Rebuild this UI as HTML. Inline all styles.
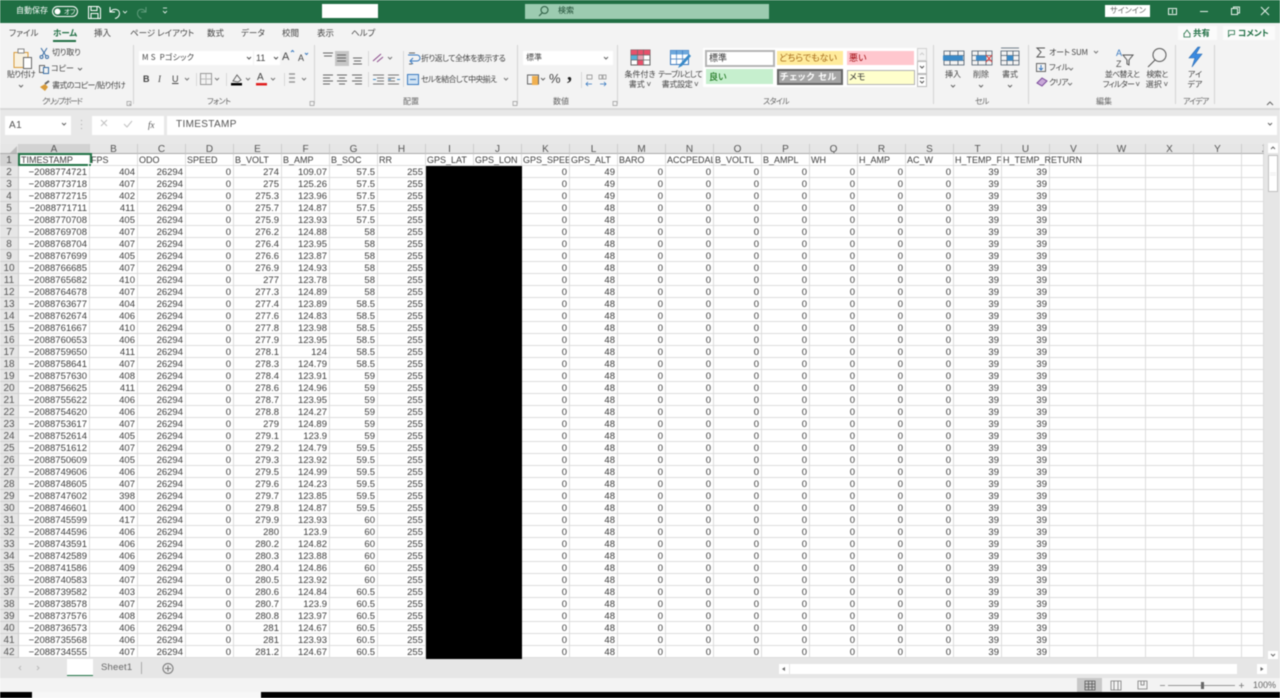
<!DOCTYPE html>
<html lang="ja"><head><meta charset="utf-8"><title>Excel</title>
<style>
html,body{margin:0;padding:0;background:#fff}
#p{position:relative;width:1280px;height:698px;overflow:hidden;background:#e6e6e6;font-family:"Liberation Sans","Noto Sans CJK JP",sans-serif;filter:blur(.4px)}
.b{position:absolute}
.t{position:absolute;white-space:nowrap;font-size:8px;line-height:12px;color:#444;font-feature-settings:"palt";font-family:"Noto Sans CJK JP","Liberation Sans",sans-serif}
.c{transform:translateX(-50%)}
.w{color:#fff}
.g{color:#666}
table{position:absolute;left:0;top:144px;border-collapse:separate;border-spacing:0;table-layout:fixed;width:1264px;font-size:9.5px;color:#3c3c3c;background:#fff;font-family:"Liberation Sans",sans-serif}
td,th{padding:2px 0 0;height:9px;line-height:9px;border-right:1px solid #dcdcdc;border-bottom:1px solid #dcdcdc;overflow:hidden;white-space:nowrap;box-sizing:content-box}
td{text-align:right;padding-right:2px}
th{background:#e6e6e6;font-weight:normal;text-align:center;color:#555;font-size:10px;border-right:1px solid #c8c8c8;border-bottom:1px solid #cfcfcf}
thead th{padding:2px 0 0;height:7px;line-height:7px;border-right:1px solid #cdcdcd;border-bottom:1px solid #ababab}
tr.h td{text-align:left;padding:2px 0 0 1px;font-size:9px}
</style></head><body><div id="p">

<div class="b" style="left:0;top:0;width:1280px;height:23px;background:#1f6e43"></div>
<div class="b" style="left:0;top:23px;width:1280px;height:85px;background:#f3f3f3"></div>
<div class="b" style="left:0;top:108px;width:1280px;height:2px;background:#d8d8d8"></div>
<div class="b" style="left:0;top:110px;width:1280px;height:34px;background:#e8e8e8"></div>

<div class="b" style="left:322px;top:4px;width:56px;height:14px;background:#fff"></div>
<div class="b" style="left:525px;top:4px;width:244px;height:15px;background:#9ccbb0"></div>
<div class="b" style="left:1105px;top:5px;width:45px;height:12px;background:#fff"></div>
<div class="b" style="left:1178px;top:26px;width:39px;height:14px;background:#fbfbfb"></div>
<div class="b" style="left:1223px;top:26px;width:52px;height:14px;background:#fbfbfb"></div>

<span class="t w" style="left:16px;top:5px">自動保存</span>
<span class="t w" style="left:64px;top:5px;font-size:6.5px">オフ</span>
<span class="t" style="left:558px;top:5px;color:#1c4a32">検索</span>
<span class="t c g" style="left:1128px;top:5px">サインイン</span>

<span class="t" style="left:9px;top:27px;font-size:8.5px">ファイル</span>
<span class="t" style="left:53px;top:27px;font-size:8.5px;font-weight:700;color:#1f6e43">ホーム</span>
<span class="t" style="left:94px;top:27px;font-size:8.5px">挿入</span>
<span class="t" style="left:130px;top:27px;font-size:8.5px">ページ レイアウト</span>
<span class="t" style="left:207px;top:27px;font-size:8.5px">数式</span>
<span class="t" style="left:241px;top:27px;font-size:8.5px">データ</span>
<span class="t" style="left:282px;top:27px;font-size:8.5px">校閲</span>
<span class="t" style="left:317px;top:27px;font-size:8.5px">表示</span>
<span class="t" style="left:351px;top:27px;font-size:8.5px">ヘルプ</span>
<div class="b" style="left:53px;top:40px;width:23px;height:2px;background:#1f6e43"></div>
<span class="t" style="left:1193px;top:27px;font-size:8.5px;font-weight:700;color:#1f6e43">共有</span>
<span class="t" style="left:1238px;top:27px;font-size:8.5px;font-weight:700;color:#1f6e43">コメント</span>

<span class="t" style="left:7px;top:69px;letter-spacing:-.6px">貼り付け</span>
<span class="t" style="left:52px;top:47px;letter-spacing:-.2px">切り取り</span>
<span class="t" style="left:51px;top:63px">コピー</span>
<span class="t" style="left:52px;top:80px;letter-spacing:-.65px">書式のコピー/貼り付け</span>
<span class="t g" style="left:42px;top:96px;letter-spacing:-1.4px">クリップボード</span>
<span class="t g" style="left:207px;top:96px;letter-spacing:-.7px">フォント</span>
<span class="t g" style="left:403px;top:96px">配置</span>
<span class="t g" style="left:553px;top:96px">数値</span>
<span class="t g" style="left:763px;top:96px;letter-spacing:-.7px">スタイル</span>
<span class="t g" style="left:975px;top:96px;letter-spacing:-.7px">セル</span>
<span class="t g" style="left:1096px;top:96px">編集</span>
<span class="t g" style="left:1183px;top:96px;letter-spacing:-.9px">アイデア</span>

<div class="b" style="left:139px;top:51px;width:114px;height:14px;background:#fff"></div>
<div class="b" style="left:254px;top:51px;width:26px;height:14px;background:#fff"></div>
<span class="t" style="left:142px;top:52px;letter-spacing:.2px">M S &nbsp;Pゴシック</span>
<span class="t" style="left:256px;top:52px;font-size:9px;font-family:'Liberation Sans',sans-serif">11</span>
<span class="t" style="left:282px;top:51px;font-size:11px;font-family:'Liberation Sans',sans-serif">A</span>
<span class="t" style="left:298px;top:52px;font-size:9px;font-family:'Liberation Sans',sans-serif">A</span>
<span class="t" style="left:143px;top:73px;font-size:9px;font-weight:700;font-family:'Liberation Sans',sans-serif">B</span>
<span class="t" style="left:158px;top:73px;font-size:9px;font-style:italic;font-family:'Liberation Serif',serif">I</span>
<span class="t" style="left:172px;top:73px;font-size:9px;text-decoration:underline;font-family:'Liberation Sans',sans-serif">U</span>
<span class="t" style="left:257px;top:72px;font-size:10px;font-family:'Liberation Sans',sans-serif">A</span>

<div class="b" style="left:335px;top:51px;width:14px;height:15px;background:#c6c6c6"></div>

<span class="t" style="left:421px;top:53px;letter-spacing:-.5px">折り返して全体を表示する</span>
<span class="t" style="left:421px;top:74px;letter-spacing:-.75px">セルを結合して中央揃え</span>

<div class="b" style="left:523px;top:51px;width:90px;height:14px;background:#fff"></div>
<span class="t" style="left:526px;top:52px">標準</span>
<span class="t" style="left:549px;top:73px;font-size:13px;font-family:'Liberation Sans',sans-serif">%</span>
<span class="t" style="left:567px;top:68px;font-size:20px;font-weight:700;color:#222;font-family:'Liberation Serif',serif">,</span>

<span class="t c" style="left:640px;top:69px">条件付き</span>
<span class="t c" style="left:640px;top:79px">書式 ˅</span>
<span class="t c" style="left:680px;top:69px;letter-spacing:-.9px">テーブルとして</span>
<span class="t c" style="left:680px;top:79px;letter-spacing:-.3px">書式設定 ˅</span>

<div class="b" style="left:703px;top:48px;width:214px;height:39px;background:#fff"></div>
<div class="b" style="left:705px;top:50px;width:66px;height:13px;background:#fff;border:2px solid #b4b4b4"></div>
<div class="b" style="left:777px;top:51px;width:66px;height:14px;background:#ffeb9c"></div>
<div class="b" style="left:847px;top:51px;width:67px;height:14px;background:#ffc7ce"></div>
<div class="b" style="left:706px;top:69px;width:67px;height:15px;background:#c6efce"></div>
<div class="b" style="left:777px;top:69px;width:62px;height:12px;background:#a5a5a5;border:2px solid #666"></div>
<div class="b" style="left:847px;top:70px;width:66px;height:13px;background:#ffffcc;border:1px solid #b2b2b2"></div>
<span class="t" style="left:709px;top:52px;font-size:9px;color:#333">標準</span>
<span class="t" style="left:779px;top:52px;font-size:9px;color:#a5691a">どちらでもない</span>
<span class="t" style="left:849px;top:52px;font-size:9px;color:#9c0006">悪い</span>
<span class="t" style="left:709px;top:71px;font-size:9px;color:#006100">良い</span>
<span class="t" style="left:780px;top:71px;font-size:9px;font-weight:700;color:#fff;letter-spacing:.8px">チェック セル</span>
<span class="t" style="left:849px;top:71px;font-size:9px;color:#333">メモ</span>

<span class="t c" style="left:953px;top:69px">挿入</span>
<span class="t c" style="left:981px;top:69px">削除</span>
<span class="t c" style="left:1010px;top:69px">書式</span>
<span class="t" style="left:1049px;top:47px;letter-spacing:-.2px">オート SUM</span>
<span class="t" style="left:1049px;top:62px">フィル</span>
<span class="t" style="left:1049px;top:77px;letter-spacing:-.8px">クリア</span>
<span class="t c" style="left:1122px;top:69px;letter-spacing:-.8px">並べ替えと</span>
<span class="t c" style="left:1121px;top:79px;letter-spacing:-.7px">フィルター ˅</span>
<span class="t c" style="left:1157px;top:69px;letter-spacing:-.6px">検索と</span>
<span class="t c" style="left:1157px;top:79px">選択 ˅</span>
<span class="t c" style="left:1195px;top:69px">アイ</span>
<span class="t c" style="left:1195px;top:79px">デア</span>

<div class="b" style="left:5px;top:116px;width:66px;height:19px;background:#fff"></div>
<div class="b" style="left:92px;top:116px;width:72px;height:19px;background:#fff"></div>
<div class="b" style="left:167px;top:116px;width:1110px;height:19px;background:#fff"></div>
<span class="t" style="left:9px;top:119px;font-size:10px;line-height:13px;letter-spacing:.5px;font-family:'Liberation Sans',sans-serif;color:#555">A1</span>
<span class="t" style="left:148px;top:119px;font-size:9px;font-style:italic;line-height:12px;font-family:'Liberation Serif',serif;color:#555">fx</span>
<span class="t" style="left:176px;top:118px;font-size:10px;line-height:13px;letter-spacing:.35px;font-family:'Liberation Sans',sans-serif;color:#555">TIMESTAMP</span>

<table><colgroup><col style="width:19px"><col style="width:71px"><col span="24" style="width:48px"><col style="width:22px"></colgroup>
<thead><tr><th></th><th style="background:#d2d2d2;border-bottom:1px solid #217346">A</th><th>B</th><th>C</th><th>D</th><th>E</th><th>F</th><th>G</th><th>H</th><th>I</th><th>J</th><th>K</th><th>L</th><th>M</th><th>N</th><th>O</th><th>P</th><th>Q</th><th>R</th><th>S</th><th>T</th><th>U</th><th>V</th><th>W</th><th>X</th><th>Y</th><th style="text-align:left;text-indent:20px">Z</th></tr></thead>
<tbody>
<tr class="h"><th style="background:#d2d2d2">1<td style="padding-left:2px">TIMESTAMP<td>FPS<td>ODO<td>SPEED<td>B_VOLT<td>B_AMP<td>B_SOC<td>RR<td>GPS_LAT<td>GPS_LON<td>GPS_SPEED<td>GPS_ALT<td>BARO<td>ACCPEDAL<td>B_VOLTL<td>B_AMPL<td>WH<td>H_AMP<td>AC_W<td>H_TEMP_FLOW<td style="overflow:visible">H_TEMP_RETURN<td><td><td><td><td>
<tr><th>2<td>−2088774721<td>404<td>26294<td>0<td>274<td>109.07<td>57.5<td>255<td><td><td>0<td>49<td>0<td>0<td>0<td>0<td>0<td>0<td>0<td>39<td>39<td><td><td><td><td>
<tr><th>3<td>−2088773718<td>407<td>26294<td>0<td>275<td>125.26<td>57.5<td>255<td><td><td>0<td>49<td>0<td>0<td>0<td>0<td>0<td>0<td>0<td>39<td>39<td><td><td><td><td>
<tr><th>4<td>−2088772715<td>402<td>26294<td>0<td>275.3<td>123.96<td>57.5<td>255<td><td><td>0<td>49<td>0<td>0<td>0<td>0<td>0<td>0<td>0<td>39<td>39<td><td><td><td><td>
<tr><th>5<td>−2088771711<td>411<td>26294<td>0<td>275.7<td>124.87<td>57.5<td>255<td><td><td>0<td>48<td>0<td>0<td>0<td>0<td>0<td>0<td>0<td>39<td>39<td><td><td><td><td>
<tr><th>6<td>−2088770708<td>405<td>26294<td>0<td>275.9<td>123.93<td>57.5<td>255<td><td><td>0<td>48<td>0<td>0<td>0<td>0<td>0<td>0<td>0<td>39<td>39<td><td><td><td><td>
<tr><th>7<td>−2088769708<td>407<td>26294<td>0<td>276.2<td>124.88<td>58<td>255<td><td><td>0<td>48<td>0<td>0<td>0<td>0<td>0<td>0<td>0<td>39<td>39<td><td><td><td><td>
<tr><th>8<td>−2088768704<td>407<td>26294<td>0<td>276.4<td>123.95<td>58<td>255<td><td><td>0<td>48<td>0<td>0<td>0<td>0<td>0<td>0<td>0<td>39<td>39<td><td><td><td><td>
<tr><th>9<td>−2088767699<td>405<td>26294<td>0<td>276.6<td>123.87<td>58<td>255<td><td><td>0<td>48<td>0<td>0<td>0<td>0<td>0<td>0<td>0<td>39<td>39<td><td><td><td><td>
<tr><th>10<td>−2088766685<td>407<td>26294<td>0<td>276.9<td>124.93<td>58<td>255<td><td><td>0<td>48<td>0<td>0<td>0<td>0<td>0<td>0<td>0<td>39<td>39<td><td><td><td><td>
<tr><th>11<td>−2088765682<td>410<td>26294<td>0<td>277<td>123.78<td>58<td>255<td><td><td>0<td>48<td>0<td>0<td>0<td>0<td>0<td>0<td>0<td>39<td>39<td><td><td><td><td>
<tr><th>12<td>−2088764678<td>407<td>26294<td>0<td>277.3<td>124.89<td>58<td>255<td><td><td>0<td>48<td>0<td>0<td>0<td>0<td>0<td>0<td>0<td>39<td>39<td><td><td><td><td>
<tr><th>13<td>−2088763677<td>404<td>26294<td>0<td>277.4<td>123.89<td>58.5<td>255<td><td><td>0<td>48<td>0<td>0<td>0<td>0<td>0<td>0<td>0<td>39<td>39<td><td><td><td><td>
<tr><th>14<td>−2088762674<td>406<td>26294<td>0<td>277.6<td>124.83<td>58.5<td>255<td><td><td>0<td>48<td>0<td>0<td>0<td>0<td>0<td>0<td>0<td>39<td>39<td><td><td><td><td>
<tr><th>15<td>−2088761667<td>410<td>26294<td>0<td>277.8<td>123.98<td>58.5<td>255<td><td><td>0<td>48<td>0<td>0<td>0<td>0<td>0<td>0<td>0<td>39<td>39<td><td><td><td><td>
<tr><th>16<td>−2088760653<td>406<td>26294<td>0<td>277.9<td>123.95<td>58.5<td>255<td><td><td>0<td>48<td>0<td>0<td>0<td>0<td>0<td>0<td>0<td>39<td>39<td><td><td><td><td>
<tr><th>17<td>−2088759650<td>411<td>26294<td>0<td>278.1<td>124<td>58.5<td>255<td><td><td>0<td>48<td>0<td>0<td>0<td>0<td>0<td>0<td>0<td>39<td>39<td><td><td><td><td>
<tr><th>18<td>−2088758641<td>407<td>26294<td>0<td>278.3<td>124.79<td>58.5<td>255<td><td><td>0<td>48<td>0<td>0<td>0<td>0<td>0<td>0<td>0<td>39<td>39<td><td><td><td><td>
<tr><th>19<td>−2088757630<td>408<td>26294<td>0<td>278.4<td>123.91<td>59<td>255<td><td><td>0<td>48<td>0<td>0<td>0<td>0<td>0<td>0<td>0<td>39<td>39<td><td><td><td><td>
<tr><th>20<td>−2088756625<td>411<td>26294<td>0<td>278.6<td>124.96<td>59<td>255<td><td><td>0<td>48<td>0<td>0<td>0<td>0<td>0<td>0<td>0<td>39<td>39<td><td><td><td><td>
<tr><th>21<td>−2088755622<td>406<td>26294<td>0<td>278.7<td>123.95<td>59<td>255<td><td><td>0<td>48<td>0<td>0<td>0<td>0<td>0<td>0<td>0<td>39<td>39<td><td><td><td><td>
<tr><th>22<td>−2088754620<td>406<td>26294<td>0<td>278.8<td>124.27<td>59<td>255<td><td><td>0<td>48<td>0<td>0<td>0<td>0<td>0<td>0<td>0<td>39<td>39<td><td><td><td><td>
<tr><th>23<td>−2088753617<td>407<td>26294<td>0<td>279<td>124.89<td>59<td>255<td><td><td>0<td>48<td>0<td>0<td>0<td>0<td>0<td>0<td>0<td>39<td>39<td><td><td><td><td>
<tr><th>24<td>−2088752614<td>405<td>26294<td>0<td>279.1<td>123.9<td>59<td>255<td><td><td>0<td>48<td>0<td>0<td>0<td>0<td>0<td>0<td>0<td>39<td>39<td><td><td><td><td>
<tr><th>25<td>−2088751612<td>407<td>26294<td>0<td>279.2<td>124.79<td>59.5<td>255<td><td><td>0<td>48<td>0<td>0<td>0<td>0<td>0<td>0<td>0<td>39<td>39<td><td><td><td><td>
<tr><th>26<td>−2088750609<td>405<td>26294<td>0<td>279.3<td>123.92<td>59.5<td>255<td><td><td>0<td>48<td>0<td>0<td>0<td>0<td>0<td>0<td>0<td>39<td>39<td><td><td><td><td>
<tr><th>27<td>−2088749606<td>406<td>26294<td>0<td>279.5<td>124.99<td>59.5<td>255<td><td><td>0<td>48<td>0<td>0<td>0<td>0<td>0<td>0<td>0<td>39<td>39<td><td><td><td><td>
<tr><th>28<td>−2088748605<td>407<td>26294<td>0<td>279.6<td>124.23<td>59.5<td>255<td><td><td>0<td>48<td>0<td>0<td>0<td>0<td>0<td>0<td>0<td>39<td>39<td><td><td><td><td>
<tr><th>29<td>−2088747602<td>398<td>26294<td>0<td>279.7<td>123.85<td>59.5<td>255<td><td><td>0<td>48<td>0<td>0<td>0<td>0<td>0<td>0<td>0<td>39<td>39<td><td><td><td><td>
<tr><th>30<td>−2088746601<td>400<td>26294<td>0<td>279.8<td>124.87<td>59.5<td>255<td><td><td>0<td>48<td>0<td>0<td>0<td>0<td>0<td>0<td>0<td>39<td>39<td><td><td><td><td>
<tr><th>31<td>−2088745599<td>417<td>26294<td>0<td>279.9<td>123.93<td>60<td>255<td><td><td>0<td>48<td>0<td>0<td>0<td>0<td>0<td>0<td>0<td>39<td>39<td><td><td><td><td>
<tr><th>32<td>−2088744596<td>406<td>26294<td>0<td>280<td>123.9<td>60<td>255<td><td><td>0<td>48<td>0<td>0<td>0<td>0<td>0<td>0<td>0<td>39<td>39<td><td><td><td><td>
<tr><th>33<td>−2088743591<td>406<td>26294<td>0<td>280.2<td>124.82<td>60<td>255<td><td><td>0<td>48<td>0<td>0<td>0<td>0<td>0<td>0<td>0<td>39<td>39<td><td><td><td><td>
<tr><th>34<td>−2088742589<td>406<td>26294<td>0<td>280.3<td>123.88<td>60<td>255<td><td><td>0<td>48<td>0<td>0<td>0<td>0<td>0<td>0<td>0<td>39<td>39<td><td><td><td><td>
<tr><th>35<td>−2088741586<td>409<td>26294<td>0<td>280.4<td>124.86<td>60<td>255<td><td><td>0<td>48<td>0<td>0<td>0<td>0<td>0<td>0<td>0<td>39<td>39<td><td><td><td><td>
<tr><th>36<td>−2088740583<td>407<td>26294<td>0<td>280.5<td>123.92<td>60<td>255<td><td><td>0<td>48<td>0<td>0<td>0<td>0<td>0<td>0<td>0<td>39<td>39<td><td><td><td><td>
<tr><th>37<td>−2088739582<td>403<td>26294<td>0<td>280.6<td>124.84<td>60.5<td>255<td><td><td>0<td>48<td>0<td>0<td>0<td>0<td>0<td>0<td>0<td>39<td>39<td><td><td><td><td>
<tr><th>38<td>−2088738578<td>407<td>26294<td>0<td>280.7<td>123.9<td>60.5<td>255<td><td><td>0<td>48<td>0<td>0<td>0<td>0<td>0<td>0<td>0<td>39<td>39<td><td><td><td><td>
<tr><th>39<td>−2088737576<td>408<td>26294<td>0<td>280.8<td>123.97<td>60.5<td>255<td><td><td>0<td>48<td>0<td>0<td>0<td>0<td>0<td>0<td>0<td>39<td>39<td><td><td><td><td>
<tr><th>40<td>−2088736573<td>406<td>26294<td>0<td>281<td>124.67<td>60.5<td>255<td><td><td>0<td>48<td>0<td>0<td>0<td>0<td>0<td>0<td>0<td>39<td>39<td><td><td><td><td>
<tr><th>41<td>−2088735568<td>406<td>26294<td>0<td>281<td>123.93<td>60.5<td>255<td><td><td>0<td>48<td>0<td>0<td>0<td>0<td>0<td>0<td>0<td>39<td>39<td><td><td><td><td>
<tr><th>42<td>−2088734555<td>407<td>26294<td>0<td>281.2<td>124.67<td>60.5<td>255<td><td><td>0<td>48<td>0<td>0<td>0<td>0<td>0<td>0<td>0<td>39<td>39<td><td><td><td><td>
</tbody></table>

<div class="b" style="left:426px;top:166px;width:96px;height:493px;background:#000"></div>
<div class="b" style="left:18px;top:153px;width:70px;height:9px;border:2px solid #217346"></div>
<div class="b" style="left:88px;top:163px;width:4px;height:4px;background:#217346;border:1px solid #fff;box-sizing:border-box"></div>

<div class="b" style="left:1265px;top:144px;width:15px;height:515px;background:#e6e6e6"></div>
<div class="b" style="left:1268px;top:155px;width:10px;height:37px;background:#fff;border:1px solid #c0c0c0;box-sizing:border-box"></div>
<div class="b" style="left:1268px;top:143px;width:10px;height:10px;background:#fff"></div>
<div class="b" style="left:1268px;top:651px;width:10px;height:9px;background:#fff"></div>

<div class="b" style="left:0;top:659px;width:1280px;height:19px;background:#e6e6e6"></div>
<div class="b" style="left:0;top:678px;width:1280px;height:15px;background:#f3f3f3"></div>
<div class="b" style="left:0;top:692px;width:1280px;height:6px;background:#000"></div>
<div class="b" style="left:32px;top:692px;width:229px;height:6px;background:#f7f7f7"></div>
<div class="b" style="left:67px;top:659px;width:26px;height:17px;background:#fff;border-bottom:1px solid #217346;box-sizing:border-box"></div>
<span class="t" style="left:101px;top:662px;font-size:9.5px;font-family:'Liberation Sans',sans-serif;color:#666;letter-spacing:.2px">Sheet1</span>
<div class="b" style="left:141px;top:662px;width:1px;height:12px;background:#aaa"></div>
<div class="b" style="left:790px;top:664px;width:447px;height:10px;background:#fff"></div>
<div class="b" style="left:779px;top:664px;width:10px;height:10px;background:#fff"></div>
<div class="b" style="left:1257px;top:664px;width:10px;height:10px;background:#fff"></div>
<div class="b" style="left:1077px;top:678px;width:25px;height:14px;background:#c8c8c8"></div>
<span class="t" style="left:1253px;top:679px;font-size:9px;font-family:'Liberation Sans',sans-serif;color:#666">100%</span>

<svg class="b" style="left:0;top:0" width="1280" height="698" viewBox="0 0 1280 698" fill="none">
<g stroke="#fff" stroke-width="1">
<rect x="52.5" y="6.5" width="25" height="10" rx="5"/>
<path d="M88.5 6.5h10l2 2v10h-12zM91 6.5v4h6v-4M91 18.5v-5h7v5"/>
<path d="M110 7v5h5M110.5 12c2-4 9-3.5 9 1.500 0 2.500-2 4.500-4.500 5"/>
<path d="M123 11l2 2 2-2M163 8h4M163 11l2 2 2-2" stroke-width=".8"/>
</g>
<circle cx="57.500" cy="11.500" r="3" fill="#fff"/>
<path d="M146 7v5h-5M145.500 12c-2-4-8-3.500-8 1.500 0 2.500 2 4.500 4 5" stroke="#5f9c7b"/>
<circle cx="544.500" cy="10" r="3.500" stroke="#2a5a40"/><path d="M542 13l-3 3" stroke="#2a5a40"/>
<g stroke="#e6f0ea"><rect x="1168.500" y="8.500" width="8" height="6"/><path d="M1172.500 9.500v4M1200 11.500h8"/><rect x="1231.500" y="8.500" width="6" height="6"/><path d="M1233.500 8.500v-1.500h6v6h-2M1261 7l8 8M1269 7l-8 8"/></g>

<g stroke="#d4d4d4"><path d="M133.500 45v59M314.500 45v59M517.500 45v59M617.500 45v59M933.500 45v59M1028.500 45v59M1175.500 45v59M1214.500 45v59"/></g>

<!-- clipboard -->
<path d="M14 52.500h14v15h-14z" stroke="#d89b3a" fill="#f9f1df"/>
<rect x="18" y="49" width="6" height="4" stroke="#888" fill="#fff"/>
<rect x="23.500" y="57.500" width="8" height="11" stroke="#666" fill="#fff"/>
<path d="M19 85l2 2 2-2" stroke="#666"/>
<path d="M41 48l5 8M47 48l-5 8" stroke="#3a6ea5"/><circle cx="41.500" cy="57" r="1.500" stroke="#3a6ea5"/><circle cx="47" cy="57" r="1.500" stroke="#3a6ea5"/>
<rect x="39.500" y="65.500" width="5" height="7" stroke="#666"/><rect x="43.500" y="67.500" width="5" height="6" stroke="#3a6ea5" fill="#f3f3f3"/>
<path d="M78 68l2 2 2-2" stroke="#666"/>
<path d="M40 87l5-3 3 3-3 4z" fill="#d89b3a"/><path d="M45 84l4-3" stroke="#666" stroke-width="2"/>
<path d="M127 101.500h4v4h-4zM129 103.500l2 2M310 101.500h4v4h-4zM513 101.500h4v4h-4zM613 101.500h4v4h-4z" stroke="#999" stroke-width=".7"/>
<!-- font -->
<path d="M247 57l2 2 2-2M274 57l2 2 2-2" stroke="#555"/>
<path d="M291 52l1.500-1.500 1.500 1.500M305 53l1.500 1.500 1.500-1.500" stroke="#3a7ac0"/>
<path d="M185 78l2 2 2-2M215 78l2 2 2-2M246 78l2 2 2-2M271 78l2 2 2-2M302 78l2 2 2-2M388 57l2 2 2-2M504 78l2 2 2-2" stroke="#777"/>
<path d="M196.500 73v13M226.500 73v13M284.500 73v13" stroke="#d8d8d8"/>
<rect x="200.500" y="73.500" width="11" height="11" stroke="#999"/><path d="M206 74v10M201 79h10" stroke="#bbb"/>
<path d="M233 81l4-6 4 5-3 2z" stroke="#666"/><rect x="231" y="83" width="11" height="2.500" fill="#000"/>
<rect x="256" y="83" width="11" height="2.500" fill="#e02020"/>
<path d="M289 74h6M289 78h6M289 82h6" stroke="#999" stroke-width="1.500"/>
<!-- align -->
<g stroke="#666"><path d="M323 53h10M324 56h8M337 55h9M337 58h9M337 61h9M353 58h9M354 61h7M353 64h9"/>
<path d="M323 75h10M323 78h7M323 81h10M323 84h7M337 75h10M339 78h6M337 81h10M339 84h6M352 75h10M355 78h7M352 81h10M355 84h7"/></g>
<path d="M368.500 51v15M368.500 72v15M403.500 51v36" stroke="#d8d8d8"/>
<path d="M373 61l8-7M377 62l6-5" stroke="#8a4a8a"/>
<path d="M373 75h11M377 78h7M377 81h7M373 84h11M388 75h11M388 78h7M388 81h7M388 84h11" stroke="#777"/>
<path d="M376 79.500h-3M391 79.500h-3M397 79.500h3" stroke="#3a8ac8"/>
<path d="M408 55h9a3 3 0 010 6h-6M413 58l-3 3 3 3" stroke="#3a7ac0"/><path d="M409 53h6M409 64h3" stroke="#666"/>
<rect x="407.500" y="74.500" width="11" height="10" stroke="#3a7ac0" fill="#cfe2f3"/><path d="M410 79.500h6" stroke="#3a7ac0"/>
<!-- number -->
<path d="M604 57l2 2 2-2M541 78l2 2 2-2" stroke="#666"/>
<rect x="527.500" y="75" width="11" height="9" stroke="#666"/><rect x="532" y="76" width="6" height="9" fill="#f0b050"/>
<path d="M581.500 72v16" stroke="#d8d8d8"/>
<path d="M592 84h-6M588 82l-2 2 2 2M600 84h6M604 82l2 2-2 2" stroke="#3a7ac0" stroke-width=".8"/>
<path d="M587 75h5v4h-5zM599 75h3v4h-3zM603 75h3v4h-3z" stroke="#888" stroke-width=".7"/>
<!-- conditional / table -->
<rect x="631" y="50" width="19" height="15" fill="#fff" stroke="#666"/><rect x="631" y="50" width="6.500" height="5" fill="#e8506a"/><rect x="637.500" y="50" width="12.500" height="5" fill="#e8506a"/><rect x="631" y="55" width="6" height="5" fill="#58b0d8"/><rect x="637" y="55" width="6" height="5" fill="#e8a0b0"/><rect x="637" y="60" width="6" height="5" fill="#e8506a"/>
<path d="M637.500 50v15M643.500 50v15M631 55h19M631 60h19" stroke="#666" stroke-width=".7"/>
<rect x="670.500" y="50.500" width="18" height="14" fill="#fff" stroke="#3a7ac0"/><rect x="670.500" y="50.500" width="18" height="4" fill="#6ea8dc"/><path d="M676.500 50v15M682.500 50v15M670 59h19" stroke="#3a7ac0" stroke-width=".7"/>
<path d="M689 54l-9 10-2 4 4-2 9-10z" fill="#3a8ac8"/>
<!-- gallery spin -->
<rect x="917.500" y="48.500" width="9" height="12" fill="#f3f3f3" stroke="#d0d0d0"/><rect x="917.500" y="61.500" width="9" height="12" fill="#fff" stroke="#bbb"/><rect x="917.500" y="74.500" width="9" height="12" fill="#fff" stroke="#bbb"/>
<path d="M920 55l2-2 2 2" stroke="#ccc"/><path d="M920 66l2 2 2-2M920 78h4M920 81l2 2 2-2" stroke="#555"/>
<!-- cells -->
<g stroke="#4a5a6a" stroke-width=".8"><path d="M944 51h20v14h-20zM944 55.500h20M944 60.500h20M950 51v14M958 51v14"/><path d="M972 51h20v14h-20zM972 55.500h20M972 60.500h20M978 51v14M986 51v14"/><path d="M1001 51h18v14h-18zM1001 55.500h18M1001 60.500h18M1007 51v14M1013 51v14M1001 48h18"/></g>
<rect x="943" y="55.500" width="20" height="5" fill="#3a8ac8"/><rect x="976" y="55.500" width="10" height="5" fill="#3a8ac8"/><rect x="1007" y="55.500" width="6" height="5" fill="#3a8ac8"/>
<path d="M986 55l6 7M992 55l-6 7" stroke="#e04040"/>
<path d="M951 85l2 2 2-2M979 85l2 2 2-2M1008 85l2 2 2-2" stroke="#666"/>
<!-- editing -->
<path d="M1045 48h-8l4 4-4 5h8" stroke="#555"/>
<path d="M1094 51l2 2 2-2M1069 68l2 2 2-2M1068 83l2 2 2-2" stroke="#777"/>
<rect x="1036.500" y="63.500" width="9" height="8" stroke="#666"/><path d="M1041 65v5M1039 68l2 2 2-2" stroke="#3a7ac0"/>
<path d="M1037 83l5-5 5 3-5 5z" fill="#c8a8d8" stroke="#7a4a9a"/>
<text x="1116" y="56" font-family="Liberation Sans,sans-serif" font-size="9" fill="#3a7ac0">A</text>
<text x="1116" y="67" font-family="Liberation Sans,sans-serif" font-size="9" fill="#555">Z</text>
<path d="M1123 55h10l-4 5v5l-2-1v-4z" stroke="#555"/>
<circle cx="1159.500" cy="55" r="6.500" stroke="#555"/><path d="M1155 60l-7 7" stroke="#555"/>
<path d="M1198 47l-9 11h6l-3 9 10-13h-6l4-7z" fill="#3a8ae0" stroke="#2a6ab0" stroke-width=".6"/>
<path d="M1267 105l3-3 3 3" stroke="#666"/>
<path d="M1184 34l3-4 3 4M1184 33v4h6v-4" stroke="#1f6e43" stroke-width=".8"/>
<path d="M1228.500 30.500h6v4h-4l-2 2z" stroke="#1f6e43" stroke-width=".8"/>
<!-- formula bar -->
<path d="M62 123l2 2 2-2M1268 123l2 2 2-2" stroke="#666"/>
<path d="M81.500 120v1M81.500 124v1M81.500 128v1" stroke="#aaa"/>
<path d="M101 120l6 6M107 120l-6 6" stroke="#c0c0c0"/><path d="M124 124l3 3 5-6" stroke="#c0c0c0"/>
<path d="M10 153h7v-7z" fill="#bdbdbd"/>
<path d="M1271 149l2-2 2 2" stroke="#666"/><path d="M1271 654l2 2 2-2" stroke="#666"/>
<path d="M1270 173h6M1270 175h6" stroke="#eee"/>
<!-- tabs -->
<path d="M21 666l-2 2 2 2M37 666l2 2-2 2" stroke="#bbb"/>
<circle cx="168" cy="668.500" r="5" stroke="#777"/><path d="M165 668.500h6M168 665.500v6" stroke="#777"/>
<path d="M785 667l-3 2 3 2z" fill="#666"/><path d="M1260.500 667l3 2-3 2z" fill="#666"/>
<!-- status -->
<g stroke="#555" stroke-width=".8"><path d="M1085 681h10v9h-10zM1085 684h10M1085 687h10M1088.500 681v9M1092 681v9"/></g>
<g stroke="#777" stroke-width=".8"><path d="M1111 681h10v9h-10zM1114 681v9M1118 681v9"/><path d="M1138 681h9v8h-9zM1141 681v4h3v-4"/><path d="M1160 685.500h5M1168 685.500h67M1239 685.500h5M1241.500 683v5" /></g>
<rect x="1201" y="682" width="3" height="7" fill="#666"/>
</svg>
</div></body></html>
